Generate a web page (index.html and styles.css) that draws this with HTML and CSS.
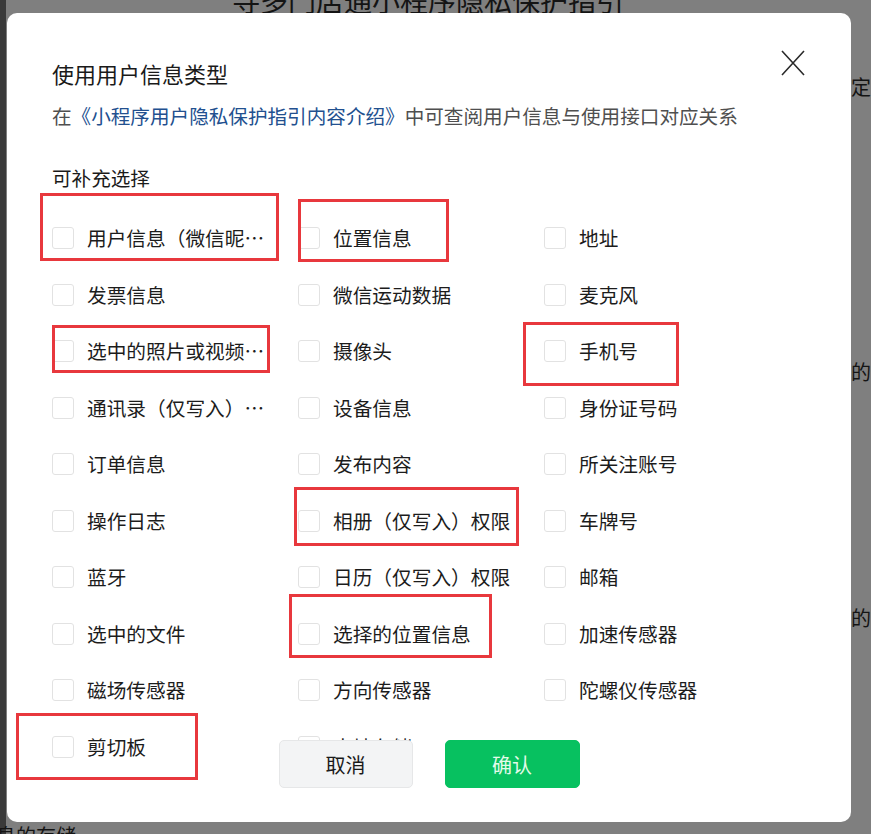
FILE: index.html
```html
<!DOCTYPE html>
<html lang="zh-CN">
<head>
<meta charset="utf-8">
<title>使用用户信息类型</title>
<link rel="stylesheet" href="styles.css">
</head>
<body>
<div class="page">
  <h1 class="page-title">寻多门店通小程序隐私保护指引</h1>
  <div class="page-line right l1">相关法律法规的规定</div>
  <div class="page-line right l2">开发者收集你的</div>
  <div class="page-line right l3">处理你的信息的实际的</div>
  <div class="page-line left l4">息的存储</div>
</div>

<div class="modal">
  <svg class="close" viewBox="0 0 24 26" width="24" height="26" aria-label="关闭">
    <path d="M1 1 L23 25 M23 1 L1 25" stroke="#2b2b2b" stroke-width="1.6" fill="none"/>
  </svg>

  <div class="title">使用用户信息类型</div>
  <div class="desc">在<span class="link">《小程序用户隐私保护指引内容介绍》</span>中可查阅用户信息与使用接口对应关系</div>
  <div class="sub">可补充选择</div>

  <div class="grid">
    <label class="item"><span class="box"></span><span class="txt">用户信息（微信昵称、头像）</span></label>
    <label class="item"><span class="box"></span><span class="txt">位置信息</span></label>
    <label class="item"><span class="box"></span><span class="txt">地址</span></label>

    <label class="item"><span class="box"></span><span class="txt">发票信息</span></label>
    <label class="item"><span class="box"></span><span class="txt">微信运动数据</span></label>
    <label class="item"><span class="box"></span><span class="txt">麦克风</span></label>

    <label class="item"><span class="box"></span><span class="txt">选中的照片或视频信息</span></label>
    <label class="item"><span class="box"></span><span class="txt">摄像头</span></label>
    <label class="item"><span class="box"></span><span class="txt">手机号</span></label>

    <label class="item"><span class="box"></span><span class="txt">通讯录（仅写入）权限</span></label>
    <label class="item"><span class="box"></span><span class="txt">设备信息</span></label>
    <label class="item"><span class="box"></span><span class="txt">身份证号码</span></label>

    <label class="item"><span class="box"></span><span class="txt">订单信息</span></label>
    <label class="item"><span class="box"></span><span class="txt">发布内容</span></label>
    <label class="item"><span class="box"></span><span class="txt">所关注账号</span></label>

    <label class="item"><span class="box"></span><span class="txt">操作日志</span></label>
    <label class="item"><span class="box"></span><span class="txt">相册（仅写入）权限</span></label>
    <label class="item"><span class="box"></span><span class="txt">车牌号</span></label>

    <label class="item"><span class="box"></span><span class="txt">蓝牙</span></label>
    <label class="item"><span class="box"></span><span class="txt">日历（仅写入）权限</span></label>
    <label class="item"><span class="box"></span><span class="txt">邮箱</span></label>

    <label class="item"><span class="box"></span><span class="txt">选中的文件</span></label>
    <label class="item"><span class="box"></span><span class="txt">选择的位置信息</span></label>
    <label class="item"><span class="box"></span><span class="txt">加速传感器</span></label>

    <label class="item"><span class="box"></span><span class="txt">磁场传感器</span></label>
    <label class="item"><span class="box"></span><span class="txt">方向传感器</span></label>
    <label class="item"><span class="box"></span><span class="txt">陀螺仪传感器</span></label>

    <label class="item"><span class="box"></span><span class="txt">剪切板</span></label>
    <label class="item"><span class="box"></span><span class="txt">本地存储</span></label>
  </div>

  <div class="footer">
    <button class="btn cancel">取消</button>
    <button class="btn confirm">确认</button>
  </div>

  <div class="mark m1"></div>
  <div class="mark m2"></div>
  <div class="mark m3"></div>
  <div class="mark m4"></div>
  <div class="mark m5"></div>
  <div class="mark m6"></div>
  <div class="mark m7"></div>
</div>
</body>
</html>
```

FILE: styles.css
```css
html, body {
  margin: 0;
  padding: 0;
}

body {
  width: 871px;
  height: 834px;
  overflow: hidden;
  position: relative;
  background: #7f7f7f;
  font-family: "Noto Sans CJK SC", "Microsoft YaHei", sans-serif;
  color: #141414;
}

.page {
  box-sizing: border-box;
  width: 871px;
  height: 834px;
  border-left: 6px solid #3a3a3a;
  display: flex;
  flex-direction: column;
}

.page-title {
  margin: -16px 0 0 226px;
  font-size: 28px;
  line-height: 32px;
  font-weight: 400;
  white-space: nowrap;
}

.page-line {
  font-size: 20px;
  line-height: 28px;
  white-space: nowrap;
}

.page-line.right {
  text-align: right;
}

.l1 { margin-top: 57px; }
.l2 { margin-top: 257px; }
.l3 { margin-top: 218px; }
.l4 { margin-top: 190px; margin-left: -10px; }

.modal {
  position: absolute;
  left: 7px;
  top: 13px;
  width: 844px;
  height: 809px;
  box-sizing: border-box;
  background: #fff;
  border-radius: 10px;
  padding: 45px 0 0 45px;
  overflow: hidden;
}

.close {
  position: absolute;
  top: 37px;
  right: 46px;
  display: block;
}

.title {
  font-size: 22px;
  line-height: 30px;
  color: #1a1a1a;
}

.desc {
  margin-top: 14px;
  font-size: 19.6px;
  line-height: 28px;
  color: #4f4f4f;
  white-space: nowrap;
}

.link {
  color: #22508f;
}

.sub {
  margin-top: 34px;
  font-size: 19.6px;
  line-height: 28px;
  color: #1a1a1a;
}

.grid {
  margin-top: 18px;
  display: grid;
  grid-template-columns: 246px 246px 246px;
  grid-auto-rows: 56.5px;
}

.item {
  display: flex;
  align-items: center;
  gap: 13px;
  min-width: 0;
}

.box {
  flex: none;
  width: 22px;
  height: 22px;
  box-sizing: border-box;
  border: 1px solid #e2e2e2;
  border-radius: 3px;
  background: #fff;
}

.txt {
  font-size: 19.7px;
  line-height: 28px;
  color: #1c1c1c;
  max-width: 178px;
  white-space: nowrap;
  overflow: hidden;
  text-overflow: ellipsis;
}

.footer {
  position: absolute;
  left: 0;
  right: 0;
  bottom: 34px;
  display: flex;
  justify-content: center;
  gap: 32px;
}

.btn {
  width: 134px;
  height: 48px;
  border-radius: 5px;
  font-family: inherit;
  font-size: 20px;
  padding: 0;
  cursor: pointer;
}

.cancel {
  background: #f3f4f5;
  border: 1px solid #e6e7e8;
  color: #1a1a1a;
}

.confirm {
  width: 135px;
  background: #07c160;
  border: 1px solid #07c160;
  color: #e4fbea;
}

.mark {
  position: absolute;
  border: 3px solid #e8383d;
  box-sizing: border-box;
  pointer-events: none;
}

.m1 { left: 33px; top: 180px; width: 239px; height: 68px; }
.m2 { left: 291px; top: 186px; width: 151px; height: 63px; }
.m3 { left: 45px; top: 312px; width: 218px; height: 48px; }
.m4 { left: 516px; top: 309px; width: 156px; height: 64px; }
.m5 { left: 287px; top: 474px; width: 225px; height: 59px; }
.m6 { left: 282px; top: 581px; width: 203px; height: 64px; }
.m7 { left: 9px; top: 700px; width: 182px; height: 67px; }
```
